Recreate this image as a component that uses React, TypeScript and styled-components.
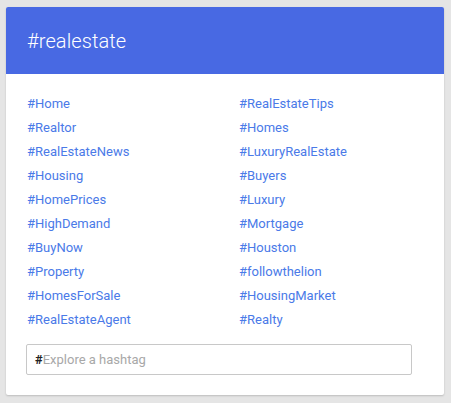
import React from 'react';
import styled, { createGlobalStyle } from 'styled-components';

const GlobalStyle = createGlobalStyle`
  html, body {
    margin: 0;
    padding: 0;
    background: #e5e5e5;
    font-family: Roboto, "Liberation Sans", sans-serif;
  }
`;

const Page = styled.div`
  padding: 7px 7px 7px 6px;
  width: 451px;
  height: 403px;
  box-sizing: border-box;
`;

const Card = styled.section`
  width: 438px;
  height: 388px;
  background: #fff;
  border-radius: 2px;
  box-shadow: 0 1px 2px rgba(0, 0, 0, 0.18);
  overflow: hidden;
  display: flex;
  flex-direction: column;
`;

const Header = styled.header`
  height: 67px;
  background: #4869e3;
  display: flex;
  align-items: center;
  padding: 0 21px;
  box-sizing: border-box;
`;

const Title = styled.h1`
  margin: 0;
  font-size: 20px;
  font-weight: 300;
  color: #fff;
  letter-spacing: 0.1px;
`;

const Body = styled.div`
  padding: 18px 20px 0 20px;
`;

const TagGrid = styled.ul`
  list-style: none;
  margin: 0;
  padding: 0 0 0 1px;
  display: grid;
  grid-template-columns: 212px 1fr;
  grid-auto-rows: 24px;
`;

const Tag = styled.li`
  font-size: 13px;
  line-height: 24px;
  color: #4a7ae8;
`;

const Search = styled.label`
  margin-top: 12px;
  width: 386px;
  height: 31px;
  box-sizing: border-box;
  border: 1px solid #c8c8c8;
  border-radius: 2px;
  display: flex;
  align-items: center;
  padding: 0 8px;
  font-size: 13px;
`;

const Hash = styled.span`
  color: #222;
  font-weight: 700;
`;

const Placeholder = styled.span`
  color: #a8a8a8;
`;

const left = [
  'Home',
  'Realtor',
  'RealEstateNews',
  'Housing',
  'HomePrices',
  'HighDemand',
  'BuyNow',
  'Property',
  'HomesForSale',
  'RealEstateAgent',
];

const right = [
  'RealEstateTips',
  'Homes',
  'LuxuryRealEstate',
  'Buyers',
  'Luxury',
  'Mortgage',
  'Houston',
  'followthelion',
  'HousingMarket',
  'Realty',
];

const App = () => {
  const tags = left.flatMap((t, i) => [t, right[i]]);

  return (
    <Page>
      <GlobalStyle />
      <Card>
        <Header>
          <Title>#realestate</Title>
        </Header>
        <Body>
          <TagGrid>
            {tags.map((t) => (
              <Tag key={t}>#{t}</Tag>
            ))}
          </TagGrid>
          <Search>
            <Hash>#</Hash>
            <Placeholder>Explore a hashtag</Placeholder>
          </Search>
        </Body>
      </Card>
    </Page>
  );
};

export default App;
